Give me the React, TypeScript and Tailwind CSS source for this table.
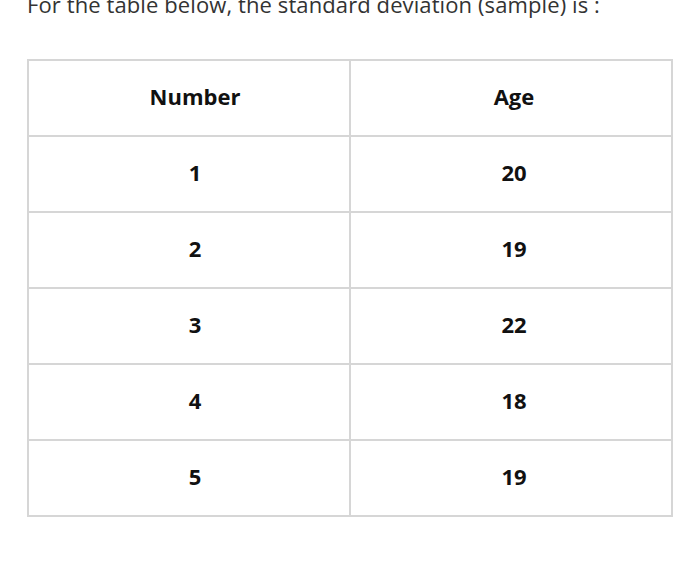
const rows = [
  ["1", "20"],
  ["2", "19"],
  ["3", "22"],
  ["4", "18"],
  ["5", "19"],
];

export default function App() {
  return (
    <div
      className="w-[700px] h-[582px] bg-white overflow-hidden pl-[27px] pr-[27px]"
      style={{ fontFamily: '"Open Sans", "Noto Sans", sans-serif' }}
    >
      <p className="text-[22px] leading-[30px] text-[#333333] mt-[-11px] whitespace-nowrap tracking-[0.1px]">
        For the table below, the standard deviation (sample) is :
      </p>
      <table className="mt-[40px] w-[646px] border-collapse text-[22px] font-bold text-[#111111]">
        <thead>
          <tr className="h-[76px]">
            <th className="border-2 border-[#d6d6d6] w-1/2 text-center pl-[12px] pb-[3px]">Number</th>
            <th className="border-2 border-[#d6d6d6] w-1/2 text-center pl-[6px] pb-[3px]">Age</th>
          </tr>
        </thead>
        <tbody>
          {rows.map(([n, age]) => (
            <tr key={n} className="h-[76px]">
              <td className="border-2 border-[#d6d6d6] text-center pl-[12px] pb-[3px]">{n}</td>
              <td className="border-2 border-[#d6d6d6] text-center pl-[6px] pb-[3px]">{age}</td>
            </tr>
          ))}
        </tbody>
      </table>
    </div>
  );
}
